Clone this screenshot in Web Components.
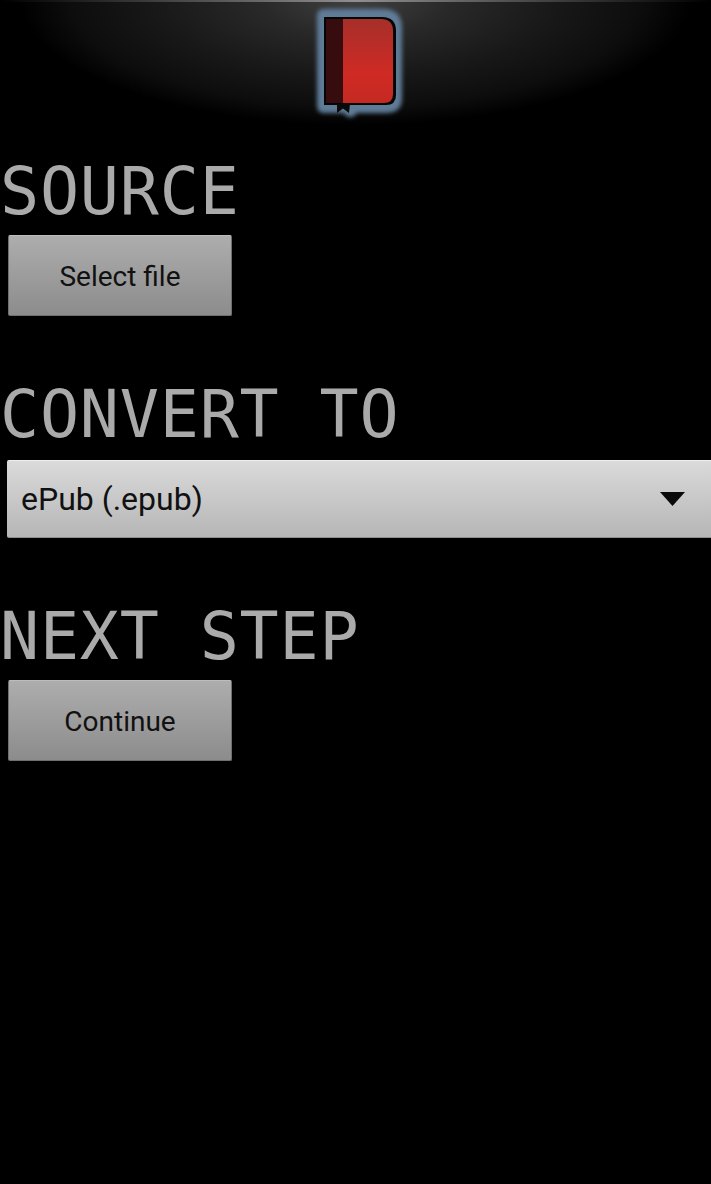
<!DOCTYPE html>
<html><head><meta charset="utf-8"><style>
html,body{margin:0;padding:0;background:#000;}
body{width:711px;height:1184px;overflow:hidden;font-family:Roboto,sans-serif;}
app-form{display:block}
</style></head><body>
<app-form>
<top-bar></top-bar>
<section-title style="margin-top:26px">SOURCE</section-title>
<action-button label="Select file" style="margin-top:9px"></action-button>
<section-title style="margin-top:65px">CONVERT TO</section-title>
<select-box value="ePub (.epub)" style="margin-top:11px"></select-box>
<section-title style="margin-top:65px">NEXT STEP</section-title>
<action-button label="Continue" style="margin-top:9px"></action-button>
</app-form>
<script>
function def(name,html,init){customElements.define(name,class extends HTMLElement{constructor(){super();this.attachShadow({mode:'open'}).innerHTML=html;}connectedCallback(){init&&init(this)}});}
def('app-form','<style>:host{display:flex;flex-direction:column}</style><slot></slot>');
def('top-bar',`<style>
:host{display:flex;justify-content:center;height:132px;box-sizing:border-box;padding-top:4px;
background:linear-gradient(90deg,#000,#8f8f8f 50%,#000) 0 0/100% 2px no-repeat,radial-gradient(ellipse 335px 125px at 50% 0,#404040 0,#292929 28%,#181818 60%,#0d0d0d 85%,#000 100%);}
svg{display:block;overflow:visible}
</style>
<svg width="89" height="114" viewBox="0 0 89 114">
<defs>
<linearGradient id="r" x1="0" y1="0" x2="0" y2="1"><stop offset="0" stop-color="#a62f2a"/><stop offset=".65" stop-color="#d02a24"/><stop offset="1" stop-color="#c42a22"/></linearGradient>
<filter id="b" x="-30%" y="-30%" width="160%" height="160%"><feGaussianBlur stdDeviation="2.200"/></filter>
</defs>
<path d="M6 12Q6 5 13 5H72Q91 5 91 24V94Q91 109 75 109H46L42 113 37 113 32 109H13Q6 109 6 102Z" fill="#5f7b97" filter="url(#b)"/>
<path d="M13 13H71Q85 13 85 27V91Q85 101 75 101H13Z" fill="#050505"/>
<path d="M26 100V109L32 104.500 38 109 39 100Z" fill="#0a0a0a"/>
<rect x="15" y="15" width="17" height="84" fill="#360c0e"/>
<path d="M32 15H70Q82 15 82 27V90Q82 99 73 99H32Z" fill="url(#r)"/>
</svg>`);
def('section-title',`<style>:host{display:block;font:65px/68px "DejaVu Sans Mono",monospace;letter-spacing:.8px;color:#aaa;white-space:pre}</style><slot></slot>`);
def('action-button',`<style>:host{display:block;width:224px;margin-left:8px}
div{height:81px;box-sizing:border-box;padding-top:1px;display:flex;align-items:center;justify-content:center;border-radius:2px;
background:linear-gradient(#adadad,#8c8c8c);border:1px solid #6f6f6f;border-top-color:#bdbdbd;color:#111;font:28px Roboto,sans-serif}</style><div id="d"></div>`,
e=>e.shadowRoot.getElementById('d').textContent=e.getAttribute('label'));
def('select-box',`<style>:host{display:block;margin-left:7px}
div{height:78px;box-sizing:border-box;display:flex;align-items:center;justify-content:space-between;padding:0 26px 0 14px;border-radius:2px 0 0 2px;
background:linear-gradient(#dadada,#b6b6b6);border-top:1px solid #eee;border-bottom:1px solid #8f8f8f;color:#111;font:32px Roboto,sans-serif}
svg{display:block}</style><div><span id="t"></span><svg width="25" height="14" viewBox="0 0 25 14"><path d="M0 0H25L12.500 14Z" fill="#0a0a0a"/></svg></div>`,
e=>e.shadowRoot.getElementById('t').textContent=e.getAttribute('value'));
</script>
</body></html>
